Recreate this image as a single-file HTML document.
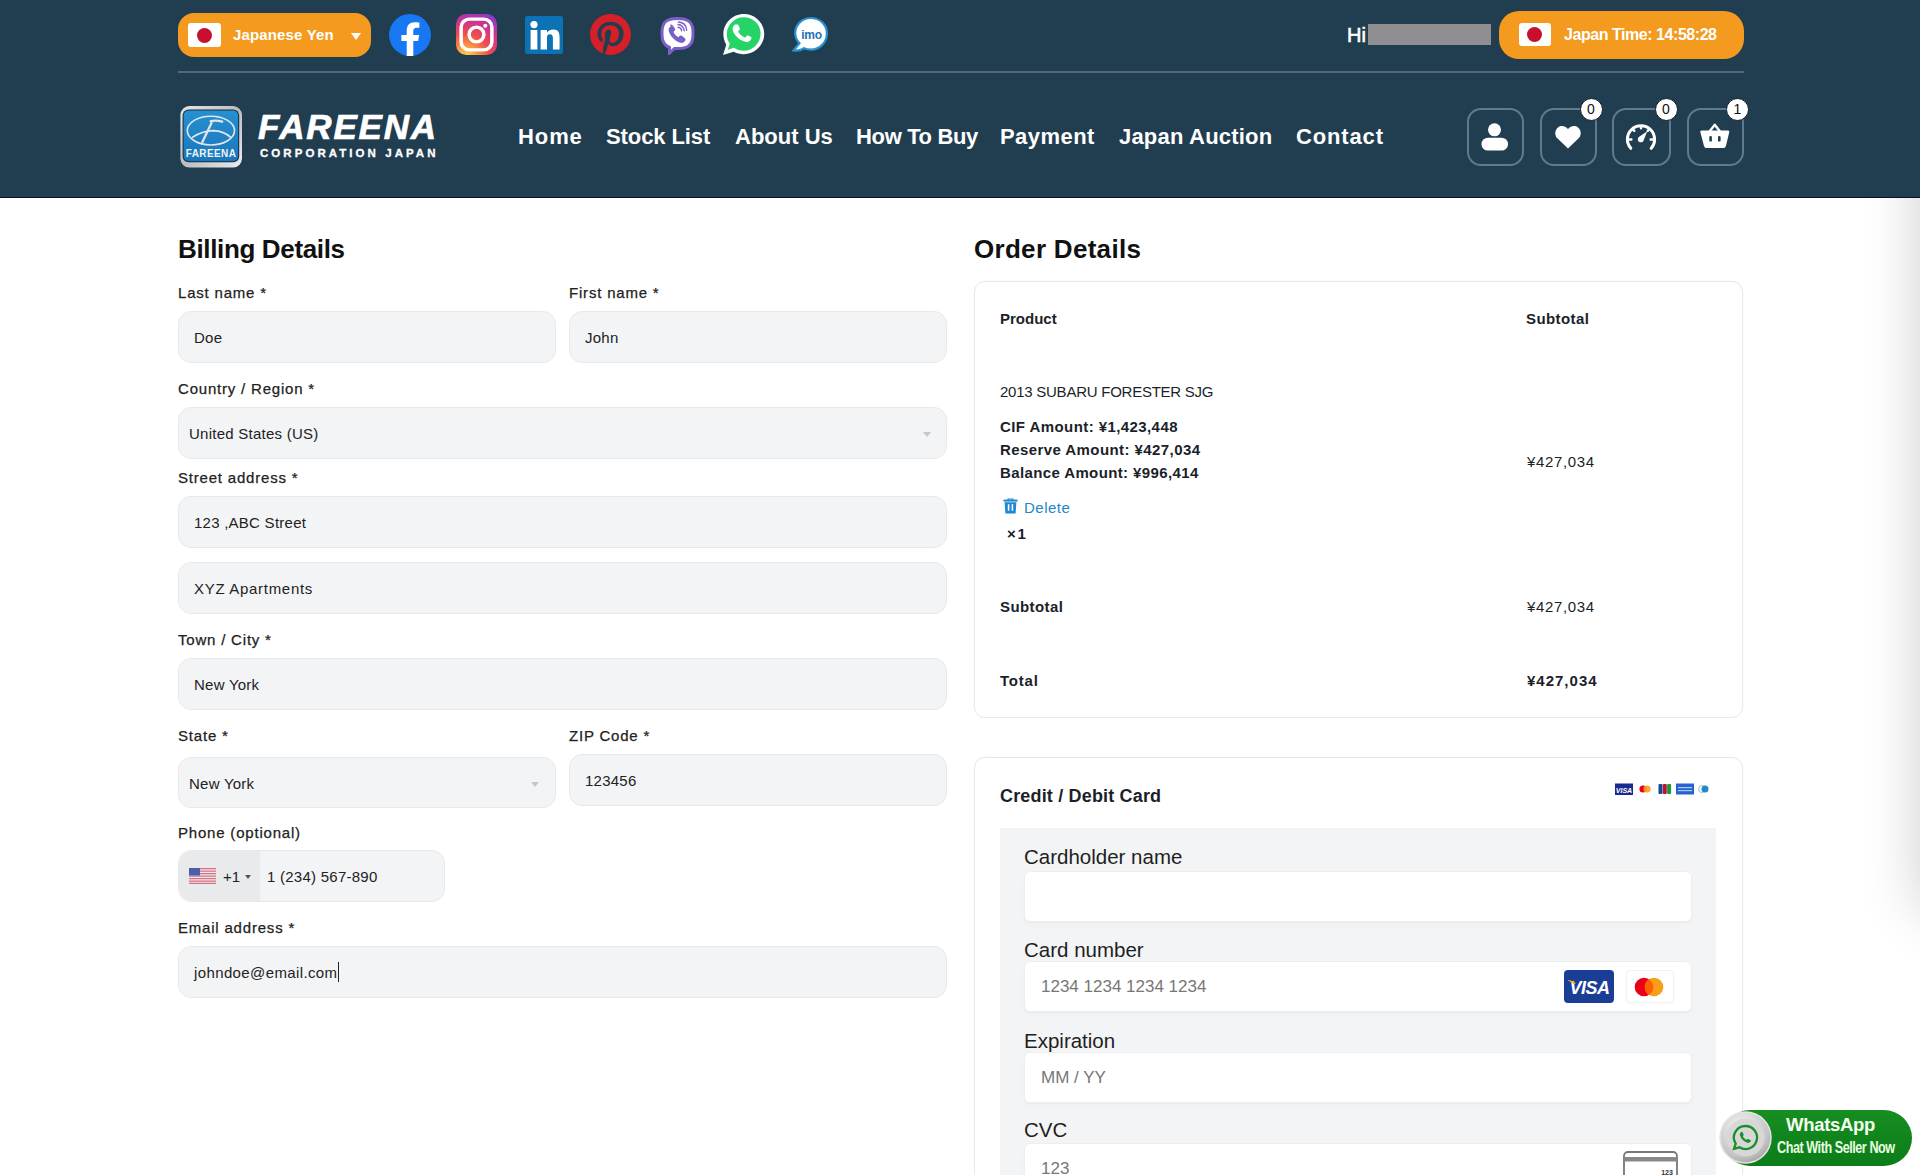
<!DOCTYPE html>
<html>
<head>
<meta charset="utf-8">
<style>
*{box-sizing:border-box;margin:0;padding:0}
html,body{width:1920px;height:1175px;overflow:hidden;background:#fff;font-family:"Liberation Sans",sans-serif;color:#1a1a1a}
.a{position:absolute}
#hdr{position:absolute;left:0;top:0;width:1920px;height:198px;background:#213d50;border-bottom:1px solid #0b0f1c;z-index:5}
.pill{position:absolute;background:#f39a1f;border-radius:16px;color:#fff;font-weight:bold;font-size:15px}
.flag{position:absolute;background:#fff;border-radius:3px;width:32px;height:24px}
.flag i{position:absolute;left:9px;top:5px;width:14px;height:14px;border-radius:50%;background:#c8102e}
.nav{position:absolute;top:124px;color:#fff;font-size:22px;font-weight:bold;white-space:nowrap}
.ib{position:absolute;top:108px;width:57px;height:58px;border:2px solid #5f7a8c;border-radius:14px}
.badge{position:absolute;width:23px;height:23px;border-radius:50%;background:#fff;color:#111;font-size:14px;text-align:center;line-height:20px;border:1.5px solid #0d1a24}
.h2{position:absolute;font-size:26px;font-weight:bold;color:#111;white-space:nowrap}
.lbl{position:absolute;font-size:15px;color:#222;white-space:nowrap;letter-spacing:0.8px;-webkit-text-stroke:0.25px #222}
.inp{position:absolute;height:52px;background:#f3f4f6;border:1px solid #e8e9ec;border-radius:13px}
.val{position:absolute;font-size:15px;color:#222;white-space:nowrap;letter-spacing:0.25px}
.box{position:absolute;border:1px solid #e9e9ea;border-radius:11px;background:#fff;box-shadow:0 0 2px rgba(0,0,0,0.04)}
.ot{position:absolute;font-size:15px;color:#1b1f2a;white-space:nowrap}
.b{font-weight:bold}
.sl{position:absolute;font-size:20.5px;color:#1f1f1f;white-space:nowrap}
.si{position:absolute;left:1024px;width:668px;height:51px;background:#fff;border-radius:6px;box-shadow:0 1px 1px rgba(0,0,0,0.03),0 3px 6px rgba(0,0,0,0.02);border:1px solid #eceef0}
.sv{position:absolute;font-size:17px;color:#777;white-space:nowrap}
</style>
</head>
<body>
<div id="hdr">
  <!-- currency pill -->
  <div class="pill" style="left:178px;top:13px;width:193px;height:44px;border-radius:16px">
    <div class="flag" style="left:10px;top:10px;width:33px;height:24px"><i style="left:9px;top:5px;width:15px;height:15px"></i></div>
    <div class="a" style="left:55px;top:13px;letter-spacing:0.15px">Japanese Yen</div>
    <div class="a" style="left:173px;top:20px;width:0;height:0;border-left:5px solid transparent;border-right:5px solid transparent;border-top:7px solid #fff"></div>
  </div>
  <!-- social icons -->
  <svg class="a" style="left:389px;top:14px" width="42" height="42" viewBox="0 0 1024 1024">
    <circle cx="512" cy="512" r="512" fill="#1877f2"/>
    <path fill="#fff" d="M711.3,660,734,512H592V416c0-40.490,19.840-80,83.440-80H740V210s-58.590-10-114.610-10C508.440,200,432,270.880,432,399.200V512H302V660H432v364a517,517,0,0,0,160,0V660Z"/>
  </svg>
  <svg class="a" style="left:456px;top:14px" width="41" height="41" viewBox="0 0 40 40">
    <defs>
      <radialGradient id="igg" cx="0.25" cy="1.05" r="1.25">
        <stop offset="0" stop-color="#fdd55b"/>
        <stop offset="0.15" stop-color="#fbb040"/>
        <stop offset="0.45" stop-color="#f04e4b"/>
        <stop offset="0.7" stop-color="#d1338f"/>
        <stop offset="1" stop-color="#7a3bd6"/>
      </radialGradient>
    </defs>
    <rect x="0" y="0" width="40" height="40" rx="10" fill="url(#igg)"/>
    <rect x="5" y="5" width="30" height="30" rx="8" fill="none" stroke="#fff" stroke-width="3.4"/>
    <circle cx="20" cy="20" r="7.2" fill="none" stroke="#fff" stroke-width="3.4"/>
    <circle cx="28.6" cy="11.4" r="2" fill="#fff"/>
  </svg>
  <svg class="a" style="left:525px;top:16px" width="38" height="38" viewBox="0 0 38 38">
    <rect width="38" height="38" rx="2" fill="#0a72b5"/>
    <circle cx="9" cy="8.6" r="3.6" fill="#fff"/>
    <rect x="5.6" y="14" width="6.8" height="19.5" fill="#fff"/>
    <path fill="#fff" d="M15.6 14h6.4v2.8c1-1.8 3.2-3.3 6.3-3.3 5.2 0 6.3 3.4 6.3 7.9V33.5h-6.7V22.6c0-2.4-.5-4.3-3-4.3-2.6 0-2.9 2-2.9 4.2V33.5h-6.4z"/>
  </svg>
  <svg class="a" style="left:590px;top:14px" width="41" height="41" viewBox="0 0 24 24">
    <path fill="#d5202a" d="M12.017 0C5.396 0 .029 5.367.029 11.987c0 5.079 3.158 9.417 7.618 11.162-.105-.949-.199-2.403.041-3.439.219-.937 1.406-5.957 1.406-5.957s-.359-.72-.359-1.781c0-1.663.967-2.911 2.168-2.911 1.024 0 1.518.769 1.518 1.688 0 1.029-.653 2.567-.992 3.992-.285 1.193.6 2.165 1.775 2.165 2.128 0 3.768-2.245 3.768-5.487 0-2.861-2.063-4.869-5.008-4.869-3.41 0-5.409 2.562-5.409 5.199 0 1.033.394 2.143.889 2.741.099.12.112.225.085.345-.09.375-.293 1.199-.334 1.363-.053.225-.172.271-.401.165-1.495-.69-2.433-2.878-2.433-4.646 0-3.776 2.748-7.252 7.92-7.252 4.158 0 7.392 2.967 7.392 6.923 0 4.135-2.607 7.462-6.233 7.462-1.214 0-2.354-.629-2.758-1.379l-.749 2.848c-.269 1.045-1.004 2.352-1.498 3.146 1.123.345 2.306.535 3.55.535 6.607 0 11.985-5.365 11.985-11.987C23.97 5.39 18.592.026 11.985.026L12.017 0z"/>
  </svg>
  <svg class="a" style="left:659px;top:16px" width="37" height="39" viewBox="0 0 37 39">
    <path fill="#fff" stroke="#7b5fc9" stroke-width="3" d="M18.5 2.5c-8 0-15.5 1.5-15.5 13.5v3c0 6.5 2.5 10.5 7.5 12.5v5.5l5-4.5c1 .1 2 .1 3 .1 8 0 15.5-1.5 15.5-13.6v-3C34 4 26.5 2.5 18.5 2.5z"/>
    <path fill="#7b5fc9" transform="translate(-2.2 -1.8) scale(1.17)" d="M11.3 9.2c.7-.5 1.6-.4 2.1.3l2 2.6c.5.7.4 1.6-.2 2.1l-.9.7c.6 2 2.2 3.8 4.3 4.7l.7-.9c.5-.6 1.5-.7 2.1-.2l2.6 2c.6.5.7 1.5.2 2.1-1 1.4-2.5 2.3-4 1.8-4.8-1.5-8.5-5.2-10-10-.4-1.5.4-3 1.8-4z"/>
    <path fill="none" stroke="#7b5fc9" stroke-width="1.4" stroke-linecap="round" d="M19 8.5c3.3.2 6 2.9 6.2 6.2M19.2 11.3c1.8.2 3.2 1.6 3.4 3.4M19.4 6c4.8.3 8 3.5 8.3 8.3"/>
  </svg>
  <svg class="a" style="left:722px;top:13px" width="43" height="43" viewBox="0 0 43 43">
    <path fill="#fff" d="M21.8 1C10.5 1 1.4 10.1 1.4 21.3c0 3.8 1 7.3 2.9 10.4L1 42l10.6-3.3c2.9 1.6 6.3 2.5 10.2 2.5 11.3 0 20.4-9 20.4-20.2S33.1 1 21.8 1z"/>
    <path fill="#25d366" d="M21.8 4.3c-9.4 0-17 7.6-17 17 0 3.5 1.1 6.8 3 9.5l-2 6 6.2-2c2.7 1.8 6 2.9 9.6 2.9 9.4 0 17-7.6 17-17s-7.5-16.4-16.8-16.4z"/>
    <path fill="#fff" d="M15.2 11.5c.5 0 .9 0 1.2.7.4.8 1.3 3.1 1.4 3.3.1.2.2.5 0 .8-.5 1-1.1 1.4-1.3 1.7-.2.3-.4.5-.1 1 .9 1.5 1.9 2.6 3.1 3.6 1.4 1.2 2.6 1.6 3.1 1.8.4.2.7.1.9-.1.3-.3 1-1.2 1.3-1.6.3-.4.6-.4 1-.2.4.1 2.4 1.1 2.8 1.3.4.2.7.3.8.5.1.2.1 1.2-.3 2.3-.4 1.1-2.3 2.2-3.2 2.3-.8.1-1.9.2-5.9-1.4-4.5-1.8-7.4-6.4-7.6-6.7-.2-.3-1.8-2.5-1.8-4.7s1.2-3.3 1.6-3.8c.4-.5.9-.7 1.2-.7z"/>
  </svg>
  <svg class="a" style="left:792px;top:16px" width="37" height="37" viewBox="0 0 37 37">
    <path fill="#fff" stroke="#2b8fd0" stroke-width="2.2" d="M19 2C10.2 2 3.2 8.6 3.2 17c0 4 1.6 7.6 4.3 10.3L1.5 34.5c3.5.5 7.5-.3 10.5-2.2 2.1.9 4.4 1.4 7 1.4 8.7 0 15.9-7.4 15.9-16.3C34.9 8.6 27.8 2 19 2z"/>
    <text x="19.5" y="22.5" text-anchor="middle" font-family="Liberation Sans" font-weight="bold" font-size="12" letter-spacing="-0.2" fill="#1f73b6">imo</text>
  </svg>
  <!-- separator -->
  <div class="a" style="left:178px;top:71px;width:1566px;height:2px;background:#4f697a"></div>
  <!-- Hi -->
  <div class="a" style="left:1347px;top:24px;color:#fff;font-size:20px;-webkit-text-stroke:0.6px #fff">Hi</div>
  <div class="a" style="left:1368px;top:24px;width:123px;height:21px;background:#8f8f92"></div>
  <div class="pill" style="left:1499px;top:11px;width:245px;height:48px;border-radius:20px">
    <div class="flag" style="left:20px;top:12px;width:32px;height:23px"><i style="left:8px;top:4px;width:15px;height:15px"></i></div>
    <div class="a" style="left:65px;top:15px;font-size:16px;letter-spacing:-0.45px">Japan Time: 14:58:28</div>
  </div>
  <!-- logo -->
  <svg class="a" style="left:178px;top:104px" width="66" height="66" viewBox="0 0 66 66">
    <defs>
      <linearGradient id="slv" x1="0" y1="0" x2="1" y2="1">
        <stop offset="0" stop-color="#e6e8ea"/>
        <stop offset="0.5" stop-color="#b9bdc2"/>
        <stop offset="1" stop-color="#eceef0"/>
      </linearGradient>
      <linearGradient id="blu" x1="0" y1="0" x2="0" y2="1">
        <stop offset="0" stop-color="#2590d0"/>
        <stop offset="1" stop-color="#1b76ba"/>
      </linearGradient>
    </defs>
    <rect x="2.4" y="2" width="61.6" height="61.6" rx="9" fill="url(#slv)"/>
    <rect x="4.6" y="5.5" width="56.6" height="52.8" rx="6" fill="#1b2a3a"/>
    <rect x="5.6" y="6.5" width="54.6" height="50.8" rx="5" fill="url(#blu)"/>
    <ellipse cx="32.9" cy="26.6" rx="23.6" ry="14.4" fill="none" stroke="#dfe8ef" stroke-width="1.6"/>
    <path d="M13.9 33.6Q24 26.8 35.3 26.6Q46 27 53.2 33.6" fill="none" stroke="#dfe8ef" stroke-width="1.7"/>
    <path d="M32.7 17.2Q38 16 44.2 17.7M33.5 19L24.4 38.1" fill="none" stroke="#e2e4e6" stroke-width="2.3" stroke-linecap="round"/>
    <text x="33" y="52.8" text-anchor="middle" font-family="Liberation Sans" font-weight="bold" font-size="10" letter-spacing="0.4" fill="#eef3f7">FAREENA</text>
  </svg>
  <div class="a" style="left:258px;top:107px;color:#fff;font-size:35px;font-weight:bold;font-style:italic;letter-spacing:1.8px;-webkit-text-stroke:0.7px #fff;line-height:40px">FAREENA</div>
  <div class="a" style="left:260px;top:146px;color:#fff;font-size:11.5px;font-weight:bold;letter-spacing:3.05px;-webkit-text-stroke:0.3px #fff;line-height:14px">CORPORATION JAPAN</div>
  <!-- nav -->
  <div class="nav" style="left:518px;letter-spacing:0.9px">Home</div>
  <div class="nav" style="left:606px;letter-spacing:-0.1px">Stock List</div>
  <div class="nav" style="left:735px">About Us</div>
  <div class="nav" style="left:856px;letter-spacing:-0.35px">How To Buy</div>
  <div class="nav" style="left:1000px;letter-spacing:0.45px">Payment</div>
  <div class="nav" style="left:1119px;letter-spacing:0.2px">Japan Auction</div>
  <div class="nav" style="left:1296px;letter-spacing:0.85px">Contact</div>
  <!-- icon boxes -->
  <div class="ib" style="left:1467px"></div>
  <div class="ib" style="left:1540px"></div>
  <div class="ib" style="left:1612px;width:59px"></div>
  <div class="ib" style="left:1687px"></div>
  <svg class="a" style="left:1480px;top:122px" width="30" height="30" viewBox="0 0 30 30">
    <circle cx="14.5" cy="7.8" r="6.5" fill="#fff"/>
    <rect x="1.5" y="15.7" width="26.5" height="12.9" rx="6.4" fill="#fff"/>
  </svg>
  <svg class="a" style="left:1553px;top:122px" width="30" height="30" viewBox="0 0 30 30">
    <path fill="#fff" d="M15 26.5L4.6 16.6C1.4 13.5 1.5 8.2 4.9 5.4c3-2.4 7.3-1.8 9.6 1.2l.5.6.5-.6c2.3-3 6.6-3.6 9.6-1.2 3.4 2.8 3.5 8.1.3 11.2z"/>
  </svg>
  <svg class="a" style="left:1624px;top:121px" width="34" height="30" viewBox="0 0 34 30">
    <path fill="none" stroke="#fff" stroke-width="3" stroke-linecap="round" d="M6.8 27.3A13.6 13.6 0 1 1 27.2 27.3"/>
    <path fill="none" stroke="#fff" stroke-width="2.4" stroke-linecap="round" d="M17 5.6v1.6M9.2 8.8l1.1 1.1M24.8 8.8l-1.1 1.1M5.6 18.5h1.8M28.4 18.5h-1.8"/>
    <path fill="#fff" d="M23.2 10.2l-3.6 9.2a3 3 0 1 1-4.4-3.6z"/>
  </svg>
  <svg class="a" style="left:1699px;top:120px" width="32" height="30" viewBox="0 0 32 30">
    <path fill="none" stroke="#fff" stroke-width="2.4" stroke-linejoin="round" stroke-linecap="round" d="M10.5 11.5L15.8 4.8 21 11.5"/>
    <path fill="#fff" d="M2.6 10.5h26.4c.9 0 1.5.8 1.3 1.6l-3.4 13.9c-.3 1.3-1.4 2.1-2.6 2.1H7.6c-1.2 0-2.3-.9-2.6-2.1L1.3 12.1c-.2-.8.4-1.6 1.3-1.6z"/>
    <rect x="10.3" y="16" width="2.6" height="5.6" rx="1.2" fill="#213d50"/>
    <rect x="19" y="16" width="2.6" height="5.6" rx="1.2" fill="#213d50"/>
  </svg>
  <div class="badge" style="left:1579.5px;top:97.7px">0</div>
  <div class="badge" style="left:1654.5px;top:97.7px">0</div>
  <div class="badge" style="left:1726px;top:97.7px">1</div>
</div>

<!-- Billing -->
<div class="h2" style="left:178px;top:234px;letter-spacing:-0.35px">Billing Details</div>
<div class="lbl" style="left:178px;top:284px">Last name *</div>
<div class="lbl" style="left:569px;top:284px">First name *</div>
<div class="inp" style="left:178px;top:311px;width:378px"></div>
<div class="inp" style="left:569px;top:311px;width:378px"></div>
<div class="val" style="left:194px;top:329px">Doe</div>
<div class="val" style="left:585px;top:329px">John</div>

<div class="lbl" style="left:178px;top:380px">Country / Region *</div>
<div class="inp" style="left:178px;top:407px;width:769px;height:52px"></div>
<div class="val" style="left:189px;top:425px">United States (US)</div>

<div class="lbl" style="left:178px;top:469px">Street address *</div>
<div class="inp" style="left:178px;top:496px;width:769px"></div>
<div class="val" style="left:194px;top:514px">123 ,ABC Street</div>
<div class="inp" style="left:178px;top:562px;width:769px"></div>
<div class="val" style="left:194px;top:580px;letter-spacing:0.7px">XYZ Apartments</div>

<div class="lbl" style="left:178px;top:631px">Town / City *</div>
<div class="inp" style="left:178px;top:658px;width:769px"></div>
<div class="val" style="left:194px;top:676px">New York</div>

<div class="lbl" style="left:178px;top:727px">State *</div>
<div class="lbl" style="left:569px;top:727px">ZIP Code *</div>
<div class="inp" style="left:178px;top:757px;width:378px;height:51px"></div>
<div class="val" style="left:189px;top:775px">New York</div>
<div class="inp" style="left:569px;top:754px;width:378px"></div>
<div class="val" style="left:585px;top:772px">123456</div>

<div class="lbl" style="left:178px;top:824px">Phone (optional)</div>
<div class="inp" style="left:178px;top:850px;width:267px"></div>
<div class="val" style="left:267px;top:868px">1 (234) 567-890</div>

<div class="lbl" style="left:178px;top:919px">Email address *</div>
<div class="inp" style="left:178px;top:946px;width:769px"></div>
<div class="val" style="left:194px;top:964px;letter-spacing:0.38px">johndoe@email.com</div>

<!-- Order -->
<div class="h2" style="left:974px;top:234px;letter-spacing:0.3px">Order Details</div>
<div class="box" style="left:974px;top:281px;width:769px;height:437px"></div>
<div class="ot b" style="left:1000px;top:310px">Product</div>
<div class="ot b" style="left:1526px;top:310px;letter-spacing:0.4px">Subtotal</div>
<div class="ot" style="left:1000px;top:383px;letter-spacing:-0.25px">2013 SUBARU FORESTER SJG</div>
<div class="ot b" style="left:1000px;top:418px;letter-spacing:0.42px">CIF Amount: &yen;1,423,448</div>
<div class="ot b" style="left:1000px;top:441px;letter-spacing:0.42px">Reserve Amount: &yen;427,034</div>
<div class="ot b" style="left:1000px;top:464px;letter-spacing:0.38px">Balance Amount: &yen;996,414</div>
<div class="ot" style="left:1024px;top:499px;color:#1e88c8;letter-spacing:0.5px">Delete</div>
<div class="ot b" style="left:1007px;top:525px;letter-spacing:-1.2px">&times; 1</div>
<div class="ot" style="left:1527px;top:453px;letter-spacing:0.65px">&yen;427,034</div>
<div class="ot b" style="left:1000px;top:598px;letter-spacing:0.4px">Subtotal</div>
<div class="ot" style="left:1527px;top:598px;letter-spacing:0.65px">&yen;427,034</div>
<div class="ot b" style="left:1000px;top:672px;letter-spacing:0.8px">Total</div>
<div class="ot b" style="left:1527px;top:672px;letter-spacing:1px">&yen;427,034</div>

<!-- Card -->
<div class="box" style="left:974px;top:757px;width:769px;height:460px"></div>
<div class="ot b" style="left:1000px;top:786px;font-size:18px;letter-spacing:0.17px">Credit / Debit Card</div>
<div class="a" style="left:1000px;top:828px;width:716px;height:400px;background:#f3f4f5"></div>
<div class="sl" style="left:1024px;top:845px">Cardholder name</div>
<div class="si" style="top:871px"></div>
<div class="sl" style="left:1024px;top:938px">Card number</div>
<div class="si" style="top:961px"></div>
<div class="sv" style="left:1041px;top:977px">1234 1234 1234 1234</div>
<div class="sl" style="left:1024px;top:1029px">Expiration</div>
<div class="si" style="top:1052px"></div>
<div class="sv" style="left:1041px;top:1068px">MM / YY</div>
<div class="sl" style="left:1024px;top:1118px">CVC</div>
<div class="si" style="top:1143px"></div>
<div class="sv" style="left:1041px;top:1159px">123</div>


<!-- select carets -->
<div class="a" style="left:923px;top:432px;width:0;height:0;border-left:4.5px solid transparent;border-right:4.5px solid transparent;border-top:5px solid #c5c7ca"></div>
<div class="a" style="left:531px;top:782px;width:0;height:0;border-left:4.5px solid transparent;border-right:4.5px solid transparent;border-top:5px solid #c5c7ca"></div>
<!-- phone flag area -->
<div class="a" style="left:179px;top:851px;width:81px;height:50px;background:#e9eaec;border-radius:14px 0 0 14px"></div>
<svg class="a" style="left:189px;top:868px" width="27" height="16" viewBox="0 0 27 16">
  <rect width="27" height="16" fill="#e8eaf0"/>
  <g fill="#d9707f"><rect y="0" width="27" height="1.25"/><rect y="2.5" width="27" height="1.25"/><rect y="5" width="27" height="1.25"/><rect y="7.5" width="27" height="1.25"/><rect y="10" width="27" height="1.25"/><rect y="12.5" width="27" height="1.25"/><rect y="14.75" width="27" height="1.25"/></g>
  <rect width="11" height="7.5" fill="#4c5fa8"/>
</svg>
<div class="val" style="left:223px;top:868px;letter-spacing:0">+1</div>
<div class="a" style="left:245px;top:875px;width:0;height:0;border-left:3.5px solid transparent;border-right:3.5px solid transparent;border-top:4px solid #555"></div>
<!-- email caret -->
<div class="a" style="left:338px;top:962px;width:1px;height:20px;background:#222"></div>
<!-- trash icon -->
<svg class="a" style="left:1003px;top:497px" width="15" height="17" viewBox="0 0 15 17">
  <path fill="#1e88d0" d="M4.5 1.5h6v1.5h-1.3v-.4H5.8v.4H4.5z"/>
  <rect x="0.5" y="2.6" width="14" height="2" fill="#1e88d0"/>
  <path fill="#1e88d0" d="M1.6 5.2h11.8l-.8 11.2H2.4z"/>
  <rect x="4.8" y="7.2" width="1.6" height="6.5" fill="#fff"/>
  <rect x="8.6" y="7.2" width="1.6" height="6.5" fill="#fff"/>
</svg>
<!-- card brand icons small -->
<svg class="a" style="left:1614px;top:782px" width="98" height="14" viewBox="0 0 98 14">
  <rect x="1" y="1.5" width="18" height="11.5" fill="#1a2b8f"/>
  <text x="10" y="10.5" text-anchor="middle" font-family="Liberation Sans" font-weight="bold" font-style="italic" font-size="7" fill="#fff">VISA</text>
  <circle cx="29" cy="7" r="3.6" fill="#eb001b"/><circle cx="33" cy="7" r="3.6" fill="#f79e1b" opacity="0.9"/>
  <rect x="44.5" y="2" width="4" height="10" rx="1" fill="#0e4c96"/><rect x="48.8" y="2" width="4" height="10" rx="1" fill="#c8102e"/><rect x="53.1" y="2" width="4" height="10" rx="1" fill="#169b3e"/>
  <rect x="62" y="1.5" width="18" height="11" fill="#2563d0"/>
  <rect x="64" y="5" width="14" height="1.2" fill="#a9cdf0"/><rect x="64" y="8" width="14" height="1.2" fill="#a9cdf0"/>
  <circle cx="88" cy="7" r="3.5" fill="#fff" stroke="#9aa" stroke-width="0.8"/><circle cx="91" cy="7" r="3.5" fill="#1e88d0"/>
</svg>
<!-- visa / mastercard in card number -->
<svg class="a" style="left:1564px;top:970px" width="51" height="34" viewBox="0 0 51 34">
  <rect width="50" height="33" rx="4" fill="#1a3e96"/>
  <text x="25.5" y="24" text-anchor="middle" font-family="Liberation Sans" font-weight="bold" font-style="italic" font-size="18" fill="#fff" letter-spacing="-0.5">VISA</text>
  <path d="M3.6 10.4Q8.5 10 11.8 13.6L10 14.2Q7.5 11.8 3.6 10.4z" fill="#f7b600"/>
</svg>
<div class="a" style="left:1626px;top:970px;width:48px;height:33px;border:1px solid #f0f1f3;border-radius:4px;background:#fff;box-shadow:0 1px 2px rgba(0,0,0,0.03)"></div>
<svg class="a" style="left:1630px;top:976px" width="38" height="22" viewBox="0 0 38 22">
  <circle cx="14" cy="11" r="9.3" fill="#eb001b"/>
  <circle cx="24" cy="11" r="9.3" fill="#f79e1b"/>
  <path d="M19 3.2a9.3 9.3 0 0 1 0 15.6a9.3 9.3 0 0 1 0-15.6z" fill="#ff5f00"/>
</svg>
<!-- CVC icon -->
<svg class="a" style="left:1623px;top:1151px" width="55" height="24" viewBox="0 0 55 24">
  <rect x="1" y="1" width="53" height="30" rx="4" fill="#fff" stroke="#777" stroke-width="1.8"/>
  <rect x="1" y="6" width="53" height="4.5" fill="#888"/>
  <text x="44" y="24" text-anchor="middle" font-family="Liberation Sans" font-weight="bold" font-size="7" fill="#333">123</text>
</svg>
<!-- right edge shadow -->
<div class="a" style="left:1920px;top:120px;width:300px;height:790px;background:#fff;box-shadow:0 0 55px rgba(0,0,0,0.2)"></div>
<!-- whatsapp chat button -->
<div class="a" style="left:1722px;top:1110px;width:190px;height:56px;border-radius:28px;background:linear-gradient(#168e21,#0c7c18)"></div>
<svg class="a" style="left:1719px;top:1111px" width="53" height="53" viewBox="2.5 2.5 53 53">
  <defs><radialGradient id="wg" cx="0.4" cy="0.3" r="0.8"><stop offset="0" stop-color="#f5f5f5"/><stop offset="0.7" stop-color="#c4c4c4"/><stop offset="1" stop-color="#9a9a9a"/></radialGradient></defs>
  <circle cx="29" cy="29" r="25.5" fill="url(#wg)" stroke="#e4e4e4" stroke-width="1.5"/>
  <circle cx="29" cy="29" r="19" fill="#d7d7d7"/>
  <path fill="none" stroke="#1b8f2a" stroke-width="2.3" d="M29 17.5a11.5 11.5 0 1 1-6 21.3l-5.5 1.6 1.7-5.2A11.5 11.5 0 0 1 29 17.5z"/>
  <path fill="#1b8f2a" d="M24.5 23.5c.4-.4 1-.4 1.3.1l1.3 2.2c.2.4.1.9-.2 1.2l-.7.6c.8 1.7 2.1 3 3.8 3.8l.6-.7c.3-.3.8-.4 1.2-.2l2.2 1.3c.5.3.5.9.1 1.3-1 1.1-2.2 1.6-3.4 1.2-3.4-1.2-6-3.8-7.2-7.2-.4-1.2.1-2.5 1-3.6z"/>
</svg>
<div class="a" style="left:1786px;top:1114px;color:#f4fff0;font-size:18.5px;font-weight:bold;letter-spacing:-0.3px;line-height:22px;white-space:nowrap">WhatsApp</div>
<div class="a" style="left:1777px;top:1137px;color:#e8ffe0;font-size:16.5px;font-weight:bold;letter-spacing:-0.6px;line-height:20px;transform:scaleX(0.765);white-space:nowrap;transform-origin:left">Chat With Seller Now</div>

</body>
</html>
